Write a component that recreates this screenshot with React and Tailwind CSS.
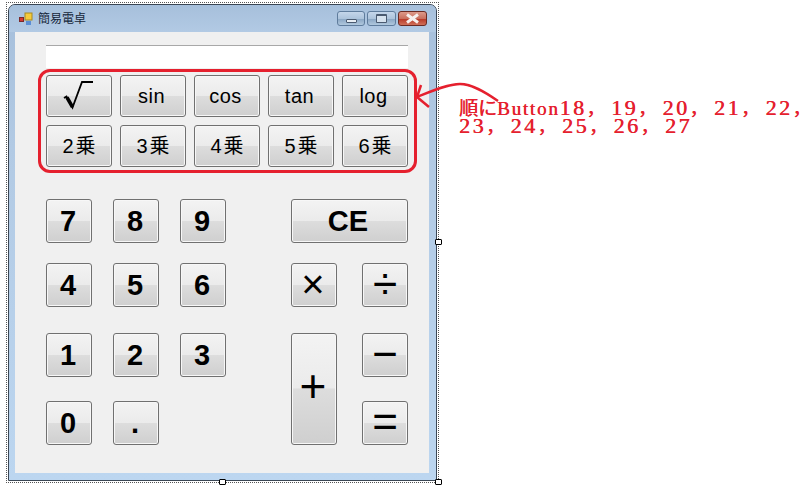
import React from "react";

const buttonBase =
  "flex items-center justify-center rounded-[3px] border border-[#707070] bg-[linear-gradient(to_bottom,#f3f3f3_0%,#ebebeb_49%,#dddddd_50%,#cfcfcf_100%)] shadow-[inset_0_0_0_1px_#f7f7f7] text-black";

const jpFont = "font-['Liberation_Sans','Noto_Sans_CJK_JP',sans-serif]";

const funcLabels = ["sin", "cos", "tan", "log"];
const powerLabels = ["2", "3", "4", "5", "6"];
const noteTop = ["18", "19", "20", "21", "22"];
const noteBottom = ["23", "24", "25", "26", "27"];

// col / row classes have to stay spelled out for tailwind
const keys = [
  { label: "7", pos: "col-start-1 row-start-1" },
  { label: "8", pos: "col-start-3 row-start-1" },
  { label: "9", pos: "col-start-5 row-start-1" },
  { label: "CE", pos: "col-start-7 col-span-3 row-start-1", text: "pr-[3px] text-[29px] font-bold" },
  { label: "4", pos: "col-start-1 row-start-3" },
  { label: "5", pos: "col-start-3 row-start-3" },
  { label: "6", pos: "col-start-5 row-start-3" },
  { label: "×", pos: "col-start-7 row-start-3", text: "pb-[2px] pr-[2px] text-[40px]" },
  { label: "÷", pos: "col-start-9 row-start-3", text: "pb-[2px] text-[44px]" },
  { label: "1", pos: "col-start-1 row-start-5" },
  { label: "2", pos: "col-start-3 row-start-5" },
  { label: "3", pos: "col-start-5 row-start-5" },
  { label: "+", pos: "col-start-7 row-start-5 row-span-3", text: "pb-[6px] pr-[2px] text-[46px]" },
  { label: "−", pos: "col-start-9 row-start-5", text: "pb-[2px] text-[44px]" },
  { label: "0", pos: "col-start-1 row-start-7" },
  { label: ".", pos: "col-start-3 row-start-7" },
  { label: "=", pos: "col-start-9 row-start-7", text: "pb-[2px] text-[44px]" },
];

const Handle = ({ className }) => (
  <div className={`absolute h-[6px] w-[7px] rounded-[1px] border border-black bg-white ${className}`} />
);

const WindowButton = ({ width, tone, children }) => (
  <div
    className={`flex h-[15px] items-center justify-center rounded-[3px] border ${width} ${tone}`}
  >
    {children}
  </div>
);

const TitleBar = () => (
  <div className="flex h-[27px] items-center bg-[linear-gradient(to_bottom,#a6bfdb,#b2cae4)] pl-[10px] pr-[9px]">
    <svg width="15" height="14" viewBox="0 0 15 14">
      <rect x="0.5" y="5.5" width="4" height="4" fill="#d8372f" stroke="#7a2a2a" />
      <rect x="6" y="1" width="7" height="7" fill="#f5cb3c" stroke="#a88a20" />
      <rect x="7" y="9" width="5" height="4" fill="#5b8fd6" />
    </svg>
    <span className={`ml-[4px] text-[12px] leading-none text-[#15263a] ${jpFont}`}>簡易電卓</span>
    <div className="ml-auto flex gap-[2px]">
      <WindowButton
        width="w-[28px]"
        tone="border-[#5f7c9c] bg-[linear-gradient(to_bottom,#c4d6ea_0%,#adc4dc_50%,#8ba7c4_55%,#b0c8de_100%)]"
      >
        <div className="mt-[4px] h-[4px] w-[11px] rounded-[1px] border border-[#4a5a70] bg-[#e8eef4]" />
      </WindowButton>
      <WindowButton
        width="w-[29px]"
        tone="border-[#5f7c9c] bg-[linear-gradient(to_bottom,#c4d6ea_0%,#adc4dc_50%,#8ba7c4_55%,#b0c8de_100%)]"
      >
        <div className="h-[9px] w-[11px] rounded-[1px] border border-t-2 border-[#4a5a70] bg-[#d6e2ee]" />
      </WindowButton>
      <WindowButton
        width="w-[29px]"
        tone="border-[#6b2a22] bg-[linear-gradient(to_bottom,#dd9a8a_0%,#c9705e_50%,#b83a28_55%,#d0705a_100%)]"
      >
        <svg width="15" height="11" viewBox="0 0 15 11">
          <path d="M2 1.5 L13 9.5 M13 1.5 L2 9.5" stroke="#f6f0ee" strokeWidth="3" />
        </svg>
      </WindowButton>
    </div>
  </div>
);

// digits plus a narrow full-width comma, so the last one stays inside the page
const NoteGroup = ({ text, comma = true }) => (
  <span className="mr-[6.5px] inline-block text-[22px] leading-[19px] tracking-[2.5px]">
    {text}
    {comma && <span className="text-[18px] tracking-normal">，</span>}
  </span>
);

const Annotation = () => (
  <>
    <div className="absolute left-[38px] top-[69px] h-[104px] w-[379px] rounded-[12px] border-[3px] border-[#e5202e]" />
    <svg className="absolute left-[410px] top-[78px]" width="95" height="36" viewBox="0 0 95 36" fill="none">
      <path d="M88 23 C75 14 62 6 50 6 C38 6 22 13 7 19" stroke="#e5202e" strokeWidth="2.5" />
      <path d="M11 7 L7 19 L19 29" stroke="#e5202e" strokeWidth="2.5" />
    </svg>
    <div className="absolute left-[459px] top-[97px] whitespace-nowrap font-['Liberation_Serif','Noto_Sans_CJK_JP',serif] text-[19px] leading-[19px] text-[#e5202e] [text-shadow:0.4px_0_0_#e5202e]">
      <div className="h-[19px]">
        <span className="font-['Noto_Sans_CJK_JP',serif]">順に</span>
        <span className="tracking-[1.8px]">Button</span>
        {noteTop.map((text) => (
          <NoteGroup key={text} text={text} />
        ))}
      </div>
      <div className="h-[19px]">
        {noteBottom.map((text) => (
          <NoteGroup key={text} text={text} comma={text !== "27"} />
        ))}
      </div>
    </div>
  </>
);

export default function App() {
  return (
    <div className="relative h-[493px] w-[811px] overflow-hidden bg-white pl-[6px] pt-[2px]">
      {/* designer selection frame */}
      <div className="h-[481px] w-[433px] border border-dotted border-[#555] p-px">
        <div className="flex h-full w-[429px] flex-col overflow-hidden rounded-t-[7px] border border-[#3a4654] bg-[linear-gradient(to_bottom,#a6bfdb,#b2cae4_30%,#bcd6f0)]">
          <TitleBar />
          <div className="mb-[7px] ml-[6px] mr-[7px] flex-1 bg-[#f0f0f0] pl-[31px] pt-[13px]">
            <div className="h-[23px] w-[362px] border-t border-[#a8a8a8] bg-white" />

            <div className="mt-[7px] grid w-[362px] grid-cols-5 gap-x-[8px] gap-y-[8px]">
              <div className={`h-[42px] ${buttonBase}`}>
                <svg width="32" height="32" viewBox="0 0 32 32" fill="none">
                  <path d="M1 18 L3.5 16.5 L9.5 27.5 L19 2 H30" stroke="black" strokeWidth="1.8" />
                  <path d="M4 17.5 L9.5 27" stroke="black" strokeWidth="3.5" />
                </svg>
              </div>
              {funcLabels.map((label) => (
                <div key={label} className={`h-[42px] pr-[3px] text-[20px] tracking-[0.5px] ${jpFont} ${buttonBase}`}>
                  {label}
                </div>
              ))}
              {powerLabels.map((n) => (
                <div key={n} className={`h-[42px] text-[20px] ${jpFont} ${buttonBase}`}>
                  {n}
                  <span className="ml-[2px]">乗</span>
                </div>
              ))}
            </div>

            <div className="mt-[32px] grid grid-cols-[46px_21px_46px_21px_46px_65px_46px_25px_46px] grid-rows-[44px_20px_44px_26px_44px_24px_44px]">
              {keys.map((key) => (
                <div
                  key={key.label}
                  className={`${key.pos} ${buttonBase} ${jpFont} leading-none ${key.text || "pr-[2px] text-[29px] font-bold"}`}
                >
                  {key.label}
                </div>
              ))}
            </div>
          </div>
        </div>
      </div>

      <Handle className="left-[219px] top-[479px]" />
      <Handle className="left-[435px] top-[479px]" />
      <Handle className="left-[435px] top-[239px]" />
      <Annotation />
    </div>
  );
}
